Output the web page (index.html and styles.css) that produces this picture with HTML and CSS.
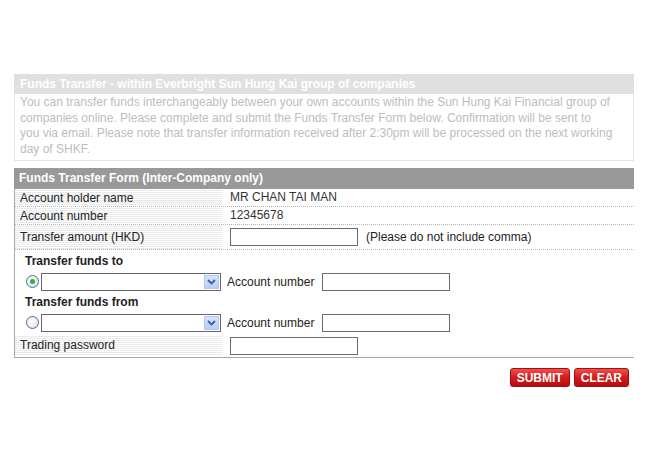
FILE: index.html
```html
<!DOCTYPE html>
<html lang="en">
<head>
    <meta charset="UTF-8">
    <title>Funds Transfer</title>
    <link rel="stylesheet" href="styles.css">
</head>
<body>

<div class="page">
    <div class="intro">
        <div class="intro-title">Funds Transfer - within Everbright Sun Hung Kai group of companies</div>
        <p class="intro-text">You can transfer funds interchangeably between your own accounts within the Sun Hung Kai Financial group of<br>
        companies online. Please complete and submit the Funds Transfer Form below. Confirmation will be sent to<br>
        you via email. Please note that transfer information received after 2:30pm will be processed on the next working<br>
        day of SHKF.</p>
    </div>

    <div class="form">
        <div class="form-title">Funds Transfer Form (Inter-Company only)</div>

        <div class="row">
            <div class="label">Account holder name</div>
            <div class="value">MR CHAN TAI MAN</div>
        </div>
        <div class="row row-short">
            <div class="label">Account number</div>
            <div class="value">12345678</div>
        </div>
        <div class="row row-input">
            <div class="label">Transfer amount (HKD)</div>
            <div class="value">
                <span class="input"></span>
                <span class="note">(Please do not include comma)</span>
            </div>
        </div>

        <div class="transfer">
            <div class="transfer-title">Transfer funds to</div>
            <div class="transfer-line">
                <span class="radio checked"></span>
                <span class="select">
                    <span class="select-btn"><svg width="9" height="6" viewBox="0 0 9 6"><path d="M1 1 L4.5 4.5 L8 1" fill="none" stroke="#3a5fa8" stroke-width="1.8"/></svg></span>
                </span>
                <span class="acc-label">Account number</span>
                <span class="input"></span>
            </div>
            <div class="transfer-title">Transfer funds from</div>
            <div class="transfer-line">
                <span class="radio"></span>
                <span class="select">
                    <span class="select-btn"><svg width="9" height="6" viewBox="0 0 9 6"><path d="M1 1 L4.5 4.5 L8 1" fill="none" stroke="#3a5fa8" stroke-width="1.8"/></svg></span>
                </span>
                <span class="acc-label">Account number</span>
                <span class="input"></span>
            </div>
        </div>

        <div class="row row-last">
            <div class="label">Trading password</div>
            <div class="value"><span class="input"></span></div>
        </div>
    </div>

    <div class="buttons">
        <button class="btn">SUBMIT</button>
        <button class="btn">CLEAR</button>
    </div>
</div>

</body>
</html>
```

FILE: styles.css
```css
body {
    margin: 0;
    font-family: "Liberation Sans", Arial, sans-serif;
    font-size: 12px;
    color: #333;
    background: #fff;
}
.page {
    width: 620px;
    padding: 74px 0 0 14px;
}
.intro {
    border: 1px solid #e4e4e4;
    border-top: none;
}
.intro-title {
    background: #e0e0e0;
    color: #fff;
    font-weight: bold;
    height: 20px;
    line-height: 20px;
    padding-left: 6px;
    margin: 0 -1px;
}
.intro-text {
    margin: 0;
    padding: 1px 6px 3px 5px;
    color: #bdbdbd;
    line-height: 15.6px;
    white-space: nowrap;
}
.form {
    margin-top: 7px;
    border-left: 1px solid #a8a8a8;
    border-bottom: 1px solid #a8a8a8;
}
.form-title {
    background: #999;
    color: #fff;
    font-weight: bold;
    height: 21px;
    line-height: 20px;
    padding-left: 5px;
    margin-left: -1px;
}
.row {
    display: flex;
    border-bottom: 1px dotted #b5b5b5;
}
.label {
    width: 202px;
    padding-left: 5px;
    height: 17px;
    line-height: 18px;
    background: repeating-linear-gradient(#fff 0, #fff 1px, #e9e9e9 1px, #e9e9e9 2px);
    color: #222;
}
.value {
    padding-left: 8px;
    line-height: 17px;
    display: flex;
    align-items: center;
    gap: 8px;
}
.row-short .label {
    height: 16px;
    line-height: 18px;
}
.row-input .label {
    height: 24px;
    line-height: 24px;
}
.row-last {
    border-bottom: none;
    margin-top: 1px;
    margin-bottom: 1px;
}
.row-last .label {
    height: 21px;
    line-height: 21px;
}
.input {
    display: inline-block;
    width: 126px;
    height: 16px;
    border: 1px solid #6b6b6b;
    background: #fff;
}
.note {
    color: #222;
}
.transfer {
    padding: 3px 0 0 10px;
}
.transfer-title {
    font-weight: bold;
    color: #222;
    height: 17px;
    line-height: 17px;
    margin-bottom: 2px;
}
.transfer-line {
    display: flex;
    align-items: center;
    height: 19px;
    margin-bottom: 3px;
}
.radio {
    width: 11px;
    height: 11px;
    border-radius: 50%;
    border: 1px solid #4a6fa0;
    background: radial-gradient(circle at 40% 40%, #fff 0, #eee 50%, #d8d8d8 100%);
    display: inline-flex;
    align-items: center;
    justify-content: center;
    margin: 0 2px 0 1px;
}
.radio.checked::after {
    content: "";
    width: 5px;
    height: 5px;
    border-radius: 50%;
    background: #27b53b;
}
.select {
    display: inline-flex;
    justify-content: flex-end;
    align-items: center;
    width: 176px;
    height: 16px;
    border: 1px solid #666;
    background: #fff;
    padding: 0 1px;
}
.select-btn {
    width: 15px;
    height: 14px;
    background: linear-gradient(#d6e4fb, #b6cdf5);
    border: 1px solid #b3c8ef;
    box-sizing: border-box;
    display: flex;
    align-items: center;
    justify-content: center;
}
.acc-label {
    margin: 0 8px 0 6px;
    color: #222;
}
.buttons {
    display: flex;
    justify-content: flex-end;
    gap: 4px;
    margin-top: 10px;
    padding-right: 5px;
}
.btn {
    font-family: "Liberation Sans", Arial, sans-serif;
    font-size: 12px;
    font-weight: bold;
    color: #fff;
    height: 19px;
    padding: 0 6px;
    border: 1px solid #a01010;
    border-radius: 3px;
    background: linear-gradient(#f05050, #d21c1c 50%, #b80d0d);
    box-shadow: 0 1px 1px rgba(0, 0, 0, 0.3);
    line-height: 16px;
}
```
